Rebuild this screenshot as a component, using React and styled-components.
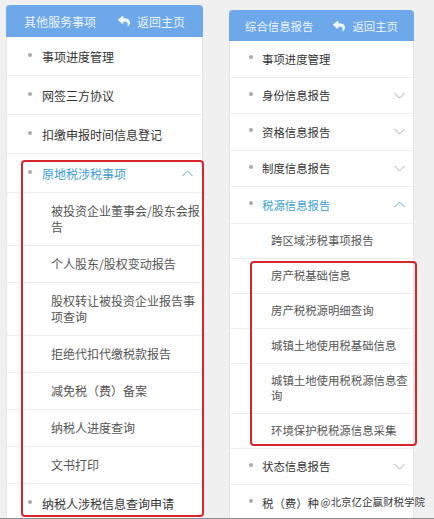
import React from 'react'
import styled, { createGlobalStyle, ThemeProvider, css } from 'styled-components'
import { FaReply } from 'react-icons/fa'

const GlobalStyle = createGlobalStyle`
  *{
    box-sizing: border-box;
  }
  body{
    margin: 0;
    background: #f0f0f0;
    font-family: "Noto Sans CJK SC", "Noto Sans", sans-serif;
  }
`

// the two screenshots are at slightly different scales
const large = { font: 12, headH: 32, rowH: 39, pad: 10, lineH: 16, bullet: 21, text: 35, sub: 44, chevron: 9, headPad: 18 }
const small = { font: 11.4, headH: 31, rowH: 36.5, pad: 9.5, lineH: 15, bullet: 19, text: 32, sub: 41, chevron: 8, headPad: 16 }

const Page = styled.div`
  position: relative;
  display: flex;
  height: 519px;
  overflow: hidden;
  border-bottom: 1px solid #8c8c8c;
`
const Column = styled.div`
  display: flex;
  flex-direction: column;
  width: ${p => p.$width}px;
  padding: ${p => p.$top}px 0 0 ${p => p.$left}px;
  background: #f0f0f0;
  ${p => p.$fill && css`flex: 1;`}
`
const Panel = styled.div`
  flex: 1;
  width: ${p => p.$width}px;
  background: #fff;
  border-left: 1px solid #e4e4e4;
  border-right: 1px solid #e4e4e4;
  font-size: ${p => p.theme.font}px;
`
const Header = styled.div`
  display: flex;
  align-items: center;
  justify-content: space-between;
  height: ${p => p.theme.headH}px;
  margin: 0 -1px;
  padding: 0 ${p => p.theme.headPad}px;
  background: #6ca8ea;
  border-radius: 4px 4px 0 0;
  color: rgba(255, 255, 255, 0.9);
`
const Back = styled.span`
  display: flex;
  align-items: center;
  gap: 7px;
  svg{
    font-size: 12px;
  }
`
const Row = styled.div`
  display: flex;
  align-items: center;
  height: ${p => p.theme.rowH}px;
  padding-left: ${p => p.theme.bullet}px;
  padding-right: ${p => p.theme.chevron}px;
  border-bottom: 1px solid #eeeeee;
  color: ${p => (p.$active ? '#3a9ecf' : '#333')};
`
const Bullet = styled.span`
  width: 4px;
  height: 4px;
  border-radius: 50%;
  background: #a9a9a9;
  margin-top: -3px;
  margin-right: ${p => p.theme.text - p.theme.bullet - 4}px;
`
const Label = styled.span`
  flex: 1;
  white-space: nowrap;
`
const SubRow = styled.div`
  padding: ${p => p.theme.pad}px 0 ${p => p.theme.pad}px ${p => p.theme.sub}px;
  line-height: ${p => p.theme.lineH}px;
  border-bottom: 1px solid #eeeeee;
  color: #555;
`
const Marked = styled.div`
  position: relative;
`
const MarkBox = styled.div`
  position: absolute;
  pointer-events: none;
  top: ${p => p.$top}px;
  bottom: ${p => p.$bottom}px;
  left: ${p => p.$left}px;
  right: ${p => p.$right}px;
  border: 2px solid #d8262c;
  border-radius: 4px;
`
const Watermark = styled.span`
  position: absolute;
  right: 9px;
  bottom: 9px;
  font-size: 10.5px;
  color: #3a3a3a;
  text-shadow: 0 0 2px #fff;
`

const Chevron = ({ up, color = '#aaa' }) => (
  <svg width="11" height="7" viewBox="0 0 11 7">
    <polyline
      points={up ? '0.5,6 5.5,1 10.5,6' : '0.5,1 5.5,6 10.5,1'}
      fill="none"
      stroke={color}
      strokeWidth="1"
    />
  </svg>
)

const Item = ({ children, more, open, active }) => (
  <Row $active={active}>
    <Bullet />
    <Label>{children}</Label>
    {more && <Chevron up={open} color={active ? '#5aaac8' : '#aaa'} />}
  </Row>
)

export default function App() {
  return (
    <Page>
      <GlobalStyle />
      <Column $width={216} $top={5} $left={6}>
        <ThemeProvider theme={large}>
          <Panel $width={197}>
            <Header>
              <span>其他服务事项</span>
              <Back><FaReply />返回主页</Back>
            </Header>
            <Item>事项进度管理</Item>
            <Item>网签三方协议</Item>
            <Item>扣缴申报时间信息登记</Item>
            <Marked>
              <Item more open active>原地税涉税事项</Item>
              <SubRow>被投资企业董事会/股东会报告</SubRow>
              <SubRow>个人股东/股权变动报告</SubRow>
              <SubRow>股权转让被投资企业报告事项查询</SubRow>
              <SubRow>拒绝代扣代缴税款报告</SubRow>
              <SubRow>减免税（费）备案</SubRow>
              <SubRow>纳税人进度查询</SubRow>
              <SubRow>文书打印</SubRow>
              <Item>纳税人涉税信息查询申请</Item>
              <MarkBox $top={6} $bottom={6} $left={14} $right={-2} />
            </Marked>
          </Panel>
        </ThemeProvider>
      </Column>
      <Column $fill $top={10} $left={13}>
        <ThemeProvider theme={small}>
          <Panel $width={185}>
            <Header>
              <span>综合信息报告</span>
              <Back><FaReply />返回主页</Back>
            </Header>
            <Item>事项进度管理</Item>
            <Item more>身份信息报告</Item>
            <Item more>资格信息报告</Item>
            <Item more>制度信息报告</Item>
            <Item more open active>税源信息报告</Item>
            <SubRow>跨区域涉税事项报告</SubRow>
            <Marked>
              <SubRow>房产税基础信息</SubRow>
              <SubRow>房产税税源明细查询</SubRow>
              <SubRow>城镇土地使用税基础信息</SubRow>
              <SubRow>城镇土地使用税税源信息查询</SubRow>
              <SubRow>环境保护税税源信息采集</SubRow>
              <MarkBox $top={2} $bottom={3} $left={20} $right={-4} />
            </Marked>
            <Item more>状态信息报告</Item>
            <Item>税（费）种</Item>
          </Panel>
        </ThemeProvider>
      </Column>
      <Watermark>@北京亿企赢财税学院</Watermark>
    </Page>
  )
}
